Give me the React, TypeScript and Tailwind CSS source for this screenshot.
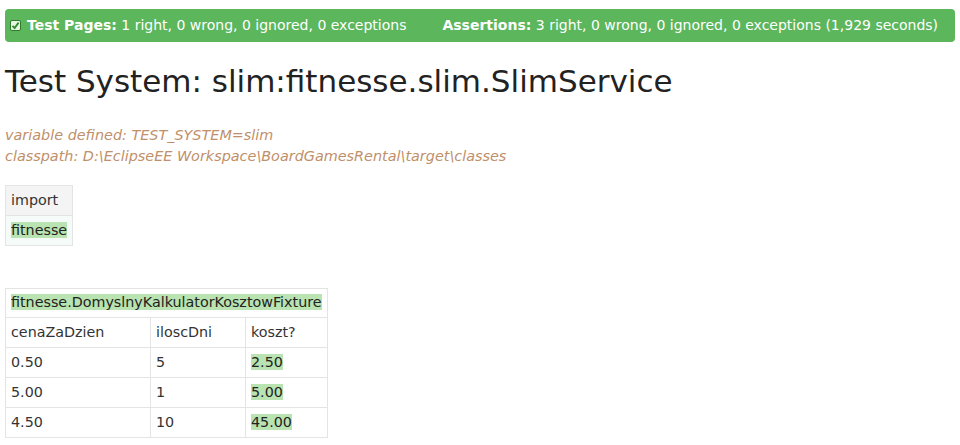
import React from "react";

const font = { fontFamily: '"DejaVu Sans", Verdana, sans-serif' };

function CheckIcon() {
  return (
    <svg width="11" height="11" viewBox="0 0 11 11" className="shrink-0">
      <rect x="0.5" y="0.5" width="10" height="10" rx="1.5" fill="#e8f5e0" stroke="#2f7a2f" />
      <path d="M2.5 5.8 L4.6 8 L8.6 2.6" fill="none" stroke="#2b8a2b" strokeWidth="1.8" />
    </svg>
  );
}

function Hl({ children }: { children: React.ReactNode }) {
  return <span className="bg-[#b9e3b1]">{children}</span>;
}

const rows = [
  ["0.50", "5", "2.50"],
  ["5.00", "1", "5.00"],
  ["4.50", "10", "45.00"],
];

export default function App() {
  return (
    <div className="min-h-[445px] w-[960px] bg-white px-[5px] pt-[9px] text-[#333]" style={font}>
      {/* STATUS BAR */}
      <div className="flex h-[33px] items-center gap-[36px] whitespace-nowrap rounded-[4px] bg-[#5cb65c] pl-[5px] text-[14px] text-white">
        <div className="flex items-center gap-[6px]">
          <CheckIcon />
          <span>
            <b>Test Pages:</b> 1 right, 0 wrong, 0 ignored, 0 exceptions
          </span>
        </div>
        <span>
          <b>Assertions:</b> 3 right, 0 wrong, 0 ignored, 0 exceptions (1,929 seconds)
        </span>
      </div>

      {/* TITLE */}
      <h1 className="mt-[17px] text-[31px] leading-[44px] text-[#222]">
        Test System: slim:fitnesse.slim.SlimService
      </h1>

      {/* INFO */}
      <div className="mt-[22px] text-[14.4px] italic leading-[21px] text-[#c0906a]">
        <div>variable defined: TEST_SYSTEM=slim</div>
        <div>classpath: D:\EclipseEE Workspace\BoardGamesRental\target\classes</div>
      </div>

      {/* IMPORT TABLE */}
      <table className="mt-[18px] border-collapse text-[14.3px]">
        <tbody>
          <tr className="h-[30px] bg-[#f4f4f4]">
            <td className="border border-[#e4e4e4] px-[5px]">import</td>
          </tr>
          <tr className="h-[30px] bg-[#f4fbf8]">
            <td className="border border-[#e4e4e4] px-[5px] text-[#222]">
              <Hl>fitnesse</Hl>
            </td>
          </tr>
        </tbody>
      </table>

      {/* FIXTURE TABLE */}
      <table className="mt-[42px] border-collapse text-[14.3px]">
        <tbody>
          <tr className="h-[29px]">
            <td colSpan={3} className="border border-[#e4e4e4] px-[5px] text-[#222]">
              <Hl>fitnesse.DomyslnyKalkulatorKosztowFixture</Hl>
            </td>
          </tr>
          <tr className="h-[30px]">
            <td className="w-[145px] border border-[#e4e4e4] px-[5px]">cenaZaDzien</td>
            <td className="w-[95px] border border-[#e4e4e4] px-[5px]">iloscDni</td>
            <td className="w-[82px] border border-[#e4e4e4] px-[5px]">koszt?</td>
          </tr>
          {rows.map((r) => (
            <tr key={r[0]} className="h-[30px]">
              <td className="border border-[#e4e4e4] px-[5px]">{r[0]}</td>
              <td className="border border-[#e4e4e4] px-[5px]">{r[1]}</td>
              <td className="border border-[#e4e4e4] px-[5px] text-[#222]">
                <Hl>{r[2]}</Hl>
              </td>
            </tr>
          ))}
        </tbody>
      </table>
    </div>
  );
}
